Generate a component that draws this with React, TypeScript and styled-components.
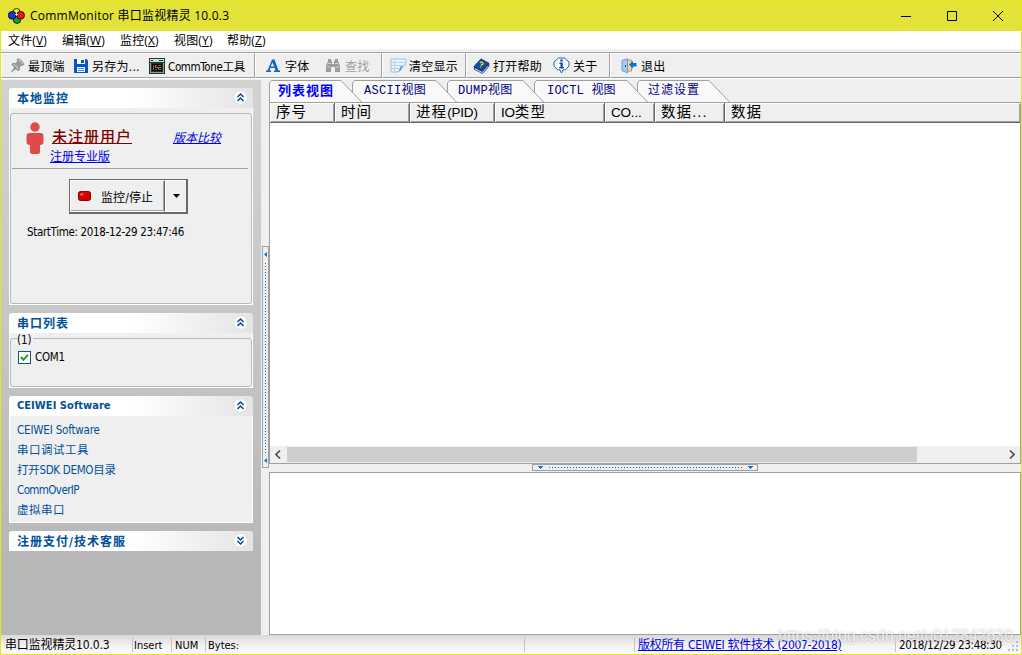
import React from "react";
import styled, { createGlobalStyle, css } from "styled-components";

const UI_FONT = `"DejaVu Sans Condensed", "Noto Sans CJK SC", sans-serif`;

const GlobalStyle = createGlobalStyle`
  * {
    box-sizing: border-box;
  }

  body {
    margin: 0;
    overflow: hidden;
    font-family: ${UI_FONT};
    font-size: 11.5px;
    color: #000;
  }

  svg {
    display: block;
    flex: none;
  }
`;

const Window = styled.div`
  width: 1022px;
  height: 655px;
  display: flex;
  flex-direction: column;
  border: 1px solid #e6e619;
  border-top: 0;
  background: #efefef;
  white-space: nowrap;
`;

const TitleBar = styled.header`
  height: 31px;
  flex: none;
  display: flex;
  align-items: center;
  padding-left: 7px;
  background: #e2e238;
  border-top: 1px solid #e6e619;
`;

const Title = styled.h1`
  flex: 1;
  margin: 0 0 2px 5px;
  font: 400 12px "Open Sans", "Noto Sans CJK SC", sans-serif;
  letter-spacing: 0.22px;
`;

const WindowButton = styled.button`
  width: 46px;
  height: 30px;
  padding: 0 0 1px;
  border: 0;
  background: none;
  display: flex;
  align-items: center;
  justify-content: center;
`;

const MenuBar = styled.nav`
  height: 18px;
  flex: none;
  display: flex;
  align-items: center;
  padding-left: 7px;
  background: #fff;
`;

const MenuItem = styled.span<{ $width: number }>`
  width: ${({ $width }) => $width}px;
  font-family: "Open Sans", "Noto Sans CJK SC", sans-serif;
  font-size: 12px;
  line-height: 18px;
  letter-spacing: 0.15px;
  padding-top: 2px;
`;

const ToolBar = styled.div`
  height: 27px;
  margin-top: 3px;
  flex: none;
  display: flex;
  border-top: 1px solid #a0a0a0;
  border-bottom: 1px solid #fff;
`;

const ToolGroup = styled.div<{ $width?: number; $pad: number }>`
  ${({ $width }) => ($width ? css`width: ${$width}px; border-right: 1px solid #a0a0a0;` : css`flex: 1;`)}
  display: flex;
  align-items: center;
  padding-left: ${({ $pad }) => $pad}px;
  border-top: 1px solid #fff;
  border-left: 1px solid #fff;
  border-bottom: 1px solid #a0a0a0;
`;

const ToolButton = styled.div<{ $width: number; $disabled?: boolean; $gap?: number; $compact?: boolean }>`
  width: ${({ $width }) => $width}px;
  flex: none;
  display: flex;
  align-items: center;
  gap: ${({ $gap }) => $gap ?? 3}px;
  font-size: ${({ $compact }) => ($compact ? 11.5 : 12)}px;
  letter-spacing: ${({ $compact }) => ($compact ? -0.35 : 0.25)}px;
  color: ${({ $disabled }) => ($disabled ? "#a0a0a0" : "#000")};
`;

const Client = styled.main`
  flex: 1;
  min-height: 0;
  display: flex;
  padding-top: 1px;
`;

const Sidebar = styled.aside`
  width: 260px;
  flex: none;
  display: flex;
  flex-direction: column;
  gap: 8px;
  padding: 8px;
  background: linear-gradient(#d2d2d2, #c6c6c6 45%, #b8b8b8 85%, #b7b7b7);
`;

const Panel = styled.section`
  display: flex;
  flex-direction: column;
`;

const PanelHeader = styled.div`
  height: 20px;
  display: flex;
  align-items: center;
  justify-content: space-between;
  padding: 0 5px 1px 8px;
  border-radius: 3px 3px 0 0;
  background: linear-gradient(90deg, #fff 50%, #e4e4e4);
`;

const PanelTitle = styled.h2<{ $latin?: boolean }>`
  margin: 0;
  font-size: ${({ $latin }) => ($latin ? 11 : 12)}px;
  font-weight: 700;
  letter-spacing: ${({ $latin }) => ($latin ? 0.05 : 1)}px;
  color: #00509a;
`;

const PanelBody = styled.div<{ $height: number }>`
  height: ${({ $height }) => $height}px;
  border: 1px solid #fff;
  border-top: 0;
  padding-top: 5px;
  background: #efefef;
`;

const GroupBox = styled.fieldset<{ $height: number; $titled?: boolean }>`
  height: ${({ $height }) => $height}px;
  min-width: 0;
  margin: ${({ $titled }) => ($titled ? "-5px" : 0)} 0 0;
  padding: 0;
  border: 1px solid #b9b9b9;
  border-radius: 3px;
`;

const UserRow = styled.div`
  height: 55px;
  margin: 0 3px 0 1px;
  padding: 8px 0 0 14px;
  display: flex;
  border-bottom: 1px solid #a0a0a0;
`;

const UserLinks = styled.div`
  margin-left: 6px;
  width: 123px;
`;

const Link = styled.a`
  display: block;
  color: #0000e8;
  text-decoration: underline;
  font-size: 12px;
  line-height: 16px;
`;

const UserName = styled(Link)`
  margin: 6px 0 3px 2px;
  color: #800000;
  font-size: 15px;
  font-weight: 500;
  letter-spacing: 1px;
  line-height: 18px;
`;

const CompareLink = styled(Link)`
  margin-top: 8px;
  font-style: italic;
`;

const SplitButton = styled.div`
  width: 119px;
  height: 35px;
  margin: 10px 0 0 58px;
  display: flex;
  border: 1px solid #696969;
  border-right: 2px solid #696969;
  border-bottom: 2px solid #696969;
`;

const ButtonFace = styled.span`
  width: 95px;
  display: flex;
  align-items: center;
  gap: 10px;
  padding-left: 7px;
  font-size: 12px;
  letter-spacing: 0.1px;
  border: 1px solid #fff;
  border-right: 1px solid #696969;
  box-shadow: inset -1px -1px #a0a0a0;
`;

const ButtonDrop = styled.span`
  flex: 1;
  display: flex;
  align-items: center;
  justify-content: center;
  border: 1px solid #fff;
  border-right: 0;
`;

const StartTime = styled.p`
  margin: 10px 0 0 16px;
  font-size: 11.5px;
  line-height: 16px;
  letter-spacing: -0.34px;
`;

const Legend = styled.legend`
  height: 10px;
  line-height: 14px;
  margin-left: 6px;
  padding: 0 1px 0 0;
  font-size: 11.5px;
`;

const PortRow = styled.label`
  margin: 7px 0 0 7px;
  display: flex;
  align-items: center;
  gap: 4px;
  font-size: 11.5px;
  letter-spacing: -0.3px;
`;

const CheckBox = styled.span`
  width: 13px;
  height: 13px;
  border: 1px solid #1c5180;
  background: #fff;
`;

const LinkList = styled.ul`
  margin: 0;
  padding: 0 0 0 7px;
  list-style: none;
`;

const LinkItem = styled.li<{ $spacing?: number }>`
  height: 20px;
  line-height: 18px;
  font-size: 11.5px;
  letter-spacing: ${({ $spacing }) => $spacing ?? 0}px;
  color: #00509a;
`;

const SideSplitter = styled.div`
  width: 8px;
  flex: none;
  padding: 166px 0 0 1px;
`;

const SideGrip = styled.div`
  width: 7px;
  height: 222px;
  display: flex;
  flex-direction: column;
  align-items: center;
  justify-content: space-between;
  padding: 5px 0 4px;
  border: 1px solid #a0a0a0;
`;

const Content = styled.div`
  flex: 1;
  min-width: 0;
  display: flex;
  flex-direction: column;
`;

const TabStrip = styled.div`
  height: 22px;
  flex: none;
  display: flex;
`;

const Tab = styled.div<{ $width: number; $pad: number; $order: number; $active?: boolean; $spacing: number }>`
  position: relative;
  z-index: ${({ $order }) => 10 - $order};
  width: ${({ $width }) => $width}px;
  padding-left: ${({ $pad }) => $pad}px;
  line-height: 23px;
  font-family: "Liberation Mono", "Noto Sans CJK SC", monospace;
  font-size: ${({ $active }) => ($active ? 13 : 12)}px;
  letter-spacing: ${({ $spacing }) => $spacing}px;
  font-weight: ${({ $active }) => ($active ? 700 : 400)};
  color: ${({ $active }) => ($active ? "#0000ff" : "#000080")};
`;

const TabShape = styled.svg`
  position: absolute;
  left: 0;
  top: 0;
`;

const TabText = styled.span`
  position: relative;
`;

const ListView = styled.div`
  height: 362px;
  flex: none;
  display: flex;
  flex-direction: column;
  border: 1px solid #a0a0a0;
  background: #fff;
`;

const ListHeader = styled.div`
  height: 20px;
  flex: none;
  display: flex;
  background: #efefef;
  border-bottom: 1px solid #696969;
`;

const Column = styled.div<{ $width?: number }>`
  ${({ $width }) => ($width ? css`width: ${$width}px; border-right: 1px solid #696969;` : css`flex: 1;`)}
  padding-left: 6px;
  line-height: 19px;
  font-family: "Liberation Sans", "Noto Sans CJK SC", sans-serif;
  font-size: 14.5px;
  letter-spacing: 1.1px;
  box-shadow: inset 1px 1px #fff, inset -1px -1px #a0a0a0;
`;

const Latin = styled.span`
  font-size: 13.5px;
  letter-spacing: -0.2px;
`;

const ListBody = styled.div`
  flex: 1;
`;

const ScrollBar = styled.div`
  height: 17px;
  flex: none;
  display: flex;
  align-items: center;
  justify-content: space-between;
  padding: 0 5px 0 5px;
  background: #efefef;
`;

const ScrollTrack = styled.div`
  flex: 1;
  margin: 0 9px 0 6px;
`;

const ScrollThumb = styled.div`
  width: 630px;
  height: 15px;
  background: #cdcdcd;
`;

const BottomSplitter = styled.div`
  height: 8px;
  flex: none;
  padding-left: 263px;
`;

const BottomGrip = styled.div`
  width: 226px;
  height: 7px;
  display: flex;
  align-items: center;
  justify-content: space-between;
  padding: 0 4px 0 5px;
  border: 1px solid #a0a0a0;
`;

const OutputPane = styled.div`
  flex: 1;
  border: 1px solid #a0a0a0;
  background: #fff;
`;

const StatusBar = styled.footer`
  position: relative;
  height: 19px;
  flex: none;
  display: flex;
  align-items: center;
  background: linear-gradient(#d9d9d9, #f4f4f4 60%, #fafafa);
`;

const StatusCell = styled.div<{ $width?: number; $pad?: number; $size?: number; $spacing?: number }>`
  ${({ $width }) => ($width ? css`width: ${$width}px;` : css`flex: 1;`)}
  height: 15px;
  line-height: 17px;
  padding-left: ${({ $pad }) => $pad ?? 1}px;
  font-size: ${({ $size }) => $size ?? 11}px;
  letter-spacing: ${({ $spacing }) => $spacing ?? 0}px;
  border-left: 1px solid #c4c4c4;

  &:first-child {
    border-left: 0;
  }
`;

const StatusLink = styled.a`
  color: #0000e8;
  text-decoration: underline;
`;

const Watermark = styled.span`
  position: absolute;
  right: 8px;
  top: -9px;
  font: 16px/20px "Liberation Sans", sans-serif;
  letter-spacing: -0.05px;
  color: rgba(255, 255, 255, 0.75);
  text-shadow: 0 0 2px rgba(0, 0, 0, 0.28);
`;

const SizeGrip = styled.svg`
  position: absolute;
  right: 2px;
  bottom: 2px;
`;

const AppIcon = () => (
  <svg width="17" height="16" viewBox="0 0 17 16" stroke="#111" strokeWidth="0.9">
    <circle cx="8.5" cy="4" r="3.5" fill="#ffe923" />
    <circle cx="9" cy="11.7" r="3.7" fill="#11a329" />
    <circle cx="4.2" cy="7.3" r="3.9" fill="#1238d8" />
    <circle cx="12.6" cy="7.3" r="3.9" fill="#ef1515" />
    <path d="M7 6.5h3M8.5 5v3" stroke="#e8e8d0" />
  </svg>
);

const PinIcon = () => (
  <svg width="16" height="16" viewBox="0 0 16 16">
    <path d="M1 15l5-6 1.4 1.4z" fill="#777" />
    <path d="M8.5.8c1.8-.8 6.8 3.9 6.3 5.8-.5 1.3-2.3.6-2.3.6L10.2 9c1 2-.2 4-1.4 3.5L3 7c-.5-1.6 2-2.2 3.6-1.3l2-2.4S7.8 1.5 8.5.8z" fill="#9b9b9b" stroke="#777" strokeWidth=".6" />
    <path d="M9.5 1.5L14 5.8M4.2 7c1.5-.5 4 1.5 4.6 4" fill="none" stroke="#d7d7d7" />
  </svg>
);

const SaveIcon = () => (
  <svg width="16" height="16" viewBox="0 0 16 16">
    <path d="M1 1h12.5L15 2.500V15H1z" fill="#0654c3" />
    <path d="M4 1h8v5H4z" fill="#fff" />
    <path d="M8 2h3v3H8z" fill="#0654c3" />
    <path d="M4 9h8v5H4z" fill="#f4f8ff" />
    <path d="M5 10.500h6M5 12.500h6" stroke="#4a87d8" />
  </svg>
);

const ToneIcon = () => (
  <svg width="16" height="16" viewBox="0 0 16 16" shapeRendering="crispEdges">
    <path d="M0 0h16v16H0z" fill="#173c36" />
    <path d="M1 1h14v3H1z" fill="#d5dcd4" />
    <path d="M2 2h2v1H2zM10 2h4v1h-4z" fill="#222" />
    <path d="M1 5h1v10H1zM14 5h1v10h-1zM2 14h12v1H2z" fill="#8f9e91" />
    <path d="M3 6h10v7H3z" fill="#080808" />
    <path d="M4 7h1v5H4zM6 7h2v1H6zM9 7h3v1H9zM6 11h2v1H6zM9 11h3v1H9z" fill="#e13122" />
    <path d="M6 9h6v1H6zM6 8h1v1H6zM9 10h1v1H9z" fill="#20b83c" />
  </svg>
);

const FontIcon = () => (
  <svg width="16" height="16" viewBox="0 0 16 16">
    <path d="M7 1.5h2.500l4 11H15V14H9v-1.500h1.600l-.8-2.500H5.300l-.8 2.500H6V14H1v-1.500h1.500zM7.400 4.500L5.800 8.500h3.400z" fill="#1367c6" fillRule="evenodd" />
  </svg>
);

const FindIcon = () => (
  <svg width="16" height="16" viewBox="0 0 16 16" fill="#9c9c9c">
    <path d="M3 1h3v2h1v3h2V3h1V1h3v2l2 5v6h-5V9H6v5H1V8l2-5z" />
    <path d="M3 5.500h3M10 5.500h3M2 9h3M11 9h3" stroke="#d5d5d5" />
  </svg>
);

const ClearIcon = () => (
  <svg width="17" height="16" viewBox="0 0 17 16">
    <path d="M1 1h15v5.500c-2 .5-3.500 1.500-4 3.500-1 2.500-3 3.500-5 4H1z" fill="#e5f5fc" stroke="#8cc4e6" />
    <path d="M2 4.500h13M2 7.500h10M2 10.500h8" stroke="#a6d8ee" />
    <path d="M4.500 1.500V13" stroke="#f3c6c6" />
    <path d="M7 14c3-1 3-5 3.500-5.500 1.500-1 4-1 5.500-2-2 .8-3.500 1.600-4 3.500-1 2.500-3 3.500-5 4z" fill="#5c9ccb" />
  </svg>
);

const BookIcon = () => (
  <svg width="17" height="16" viewBox="0 0 17 16">
    <path d="M1 8.500L8 .8l8 4.400v3L9.500 15.500 1.500 11.500z" fill="#123f83" stroke="#0a2858" strokeWidth=".6" />
    <path d="M1.500 8L8 1l7.500 4.200-6.300 7z" fill="#124f9f" />
    <path d="M2 10.300l7.200 3.700 6.300-6.700v.8L9.300 14.900 2 11.200z" fill="#edf3f8" />
    <path d="M6.800 4.800c1.200-1.500 4-.2 3.200 1.200-.5.900-1.700.5-2 1.500M7.300 8.700l.8.400" fill="none" stroke="#f4d52a" strokeWidth="1.400" />
  </svg>
);

const InfoIcon = () => (
  <svg width="17" height="17" viewBox="0 0 17 17">
    <path d="M5.500 1h6L16 5v4l-3.500 3.800H10L8.500 16 7 12.800H4.500L1 9V5z" fill="#fff" stroke="#2161a5" strokeLinejoin="round" />
    <path d="M7.300 2.500h2.500v2H7.300zM6.500 5.500h3.300V10H11v1.400H6.200V10h1.300V6.900h-1z" fill="#0f4d9e" />
  </svg>
);

const ExitIcon = () => (
  <svg width="16" height="16" viewBox="0 0 16 16">
    <path d="M5.500 2h5v11h-5z" fill="#f4d59a" stroke="#9a9aa2" />
    <path d="M1 2.500L6.500.8v14L1 12.600z" fill="#a9cbed" stroke="#7397c6" />
    <path d="M4.500 7v2" stroke="#223e66" />
    <path d="M8 6.500L12 3v2h3.500v3.500H12v2.200z" fill="#0673dc" />
  </svg>
);

const UserIcon = () => (
  <svg width="18" height="33" viewBox="0 0 18 33" fill="#e2494b">
    <circle cx="9" cy="5" r="4.700" />
    <path d="M3.500 11h11q3 0 3 3v6q0 3-3.500 3v7q0 2-2 2H6q-2 0-2-2v-7q-3.500 0-3.500-3v-6q0-3 3-3z" />
  </svg>
);

const Chevrons = ({ down }: { down?: boolean }) => (
  <svg width="15" height="15" viewBox="0 0 15 15">
    <circle cx="7.500" cy="7.500" r="6.900" fill="#fff" stroke="#dcdcdc" />
    <path
      d={down ? "M4.500 4l3 3 3-3M4.500 8l3 3 3-3" : "M4.500 7l3-3 3 3M4.500 11l3-3 3 3"}
      fill="none"
      stroke="#0a468c"
      strokeWidth="1.500"
    />
  </svg>
);

const ArrowLeft = () => (
  <svg width="3" height="5"><path d="M3 0v5L0 2.500z" fill="#0078d7" /></svg>
);

const ArrowDown = () => (
  <svg width="5" height="3" shapeRendering="crispEdges">
    <path d="M0 0h5v1H0zM1 1h3v1H1zM2 2h1v1H2z" fill="#0078d7" />
  </svg>
);

type TabData = { label: string; width: number; top: number; pad: number; spacing: number };

const tabs: TabData[] = [
  { label: "列表视图", width: 83, top: 72, pad: 9, spacing: 1 },
  { label: "ASCII视图", width: 95, top: 84, pad: 12, spacing: 0.3 },
  { label: "DUMP视图", width: 87, top: 76, pad: 11, spacing: 0.3 },
  { label: "IOCTL 视图", width: 103, top: 93, pad: 13, spacing: 0.2 },
  { label: "过滤设置", width: 94, top: 72, pad: 11, spacing: 1 },
];

const menus = [
  { label: "文件", key: "V", width: 54 },
  { label: "编辑", key: "W", width: 58 },
  { label: "监控", key: "X", width: 54 },
  { label: "视图", key: "Y", width: 53 },
  { label: "帮助", key: "Z", width: 45 },
];

const links = [
  { label: "CEIWEI Software", spacing: -0.18 },
  { label: "串口调试工具", spacing: 0.5 },
  { label: "打开SDK DEMO目录", spacing: -0.3 },
  { label: "CommOverIP", spacing: -0.6 },
  { label: "虚拟串口", spacing: 0.5 },
];

const SidePanels = () => (
  <Sidebar>
    <Panel>
      <PanelHeader>
        <PanelTitle>本地监控</PanelTitle>
        <Chevrons />
      </PanelHeader>
      <PanelBody $height={197}>
        <GroupBox $height={191}>
          <UserRow>
            <UserIcon />
            <UserLinks>
              <UserName>未注册用户</UserName>
              <Link>注册专业版</Link>
            </UserLinks>
            <CompareLink>版本比较</CompareLink>
          </UserRow>
          <SplitButton>
            <ButtonFace>
              <svg width="13" height="10" viewBox="0 0 13 10">
                <rect x="0.5" y="0.5" width="12" height="9" rx="2" fill="#d40000" stroke="#8a0000" />
                <path d="M2.500 2.500h4l-4 2.500z" fill="#ff8080" />
              </svg>
              监控/停止
            </ButtonFace>
            <ButtonDrop>
              <svg width="7" height="4" viewBox="0 0 7 4">
                <path d="M0 0h7L3.500 4z" />
              </svg>
            </ButtonDrop>
          </SplitButton>
          <StartTime>StartTime: 2018-12-29 23:47:46</StartTime>
        </GroupBox>
      </PanelBody>
    </Panel>

    <Panel>
      <PanelHeader>
        <PanelTitle>串口列表</PanelTitle>
        <Chevrons />
      </PanelHeader>
      <PanelBody $height={55}>
        <GroupBox $height={54} $titled>
          <Legend>(1)</Legend>
          <PortRow>
            <CheckBox>
              <svg width="11" height="11" viewBox="0 0 11 11">
                <path d="M2 5l2.500 2.800L9 2.800" fill="none" stroke="#21a121" strokeWidth="2" />
              </svg>
            </CheckBox>
            COM1
          </PortRow>
        </GroupBox>
      </PanelBody>
    </Panel>

    <Panel>
      <PanelHeader>
        <PanelTitle $latin>CEIWEI Software</PanelTitle>
        <Chevrons />
      </PanelHeader>
      <PanelBody $height={107}>
        <LinkList>
          {links.map(({ label, spacing }) => (
            <LinkItem key={label} $spacing={spacing}>{label}</LinkItem>
          ))}
        </LinkList>
      </PanelBody>
    </Panel>

    <Panel>
      <PanelHeader>
        <PanelTitle>注册支付/技术客服</PanelTitle>
        <Chevrons down />
      </PanelHeader>
    </Panel>
  </Sidebar>
);

const App: React.FC = () => (
  <>
    <GlobalStyle />
    <Window>
      <TitleBar>
        <AppIcon />
        <Title>CommMonitor 串口监视精灵 10.0.3</Title>
        <WindowButton aria-label="Minimize">
          <svg width="10" height="10"><path d="M0 5.500h10" stroke="#000" /></svg>
        </WindowButton>
        <WindowButton aria-label="Maximize">
          <svg width="10" height="10"><path d="M.5.5h9v9h-9z" fill="none" stroke="#000" /></svg>
        </WindowButton>
        <WindowButton aria-label="Close">
          <svg width="10" height="10"><path d="M0 0l10 10M10 0L0 10" stroke="#000" /></svg>
        </WindowButton>
      </TitleBar>

      <MenuBar>
        {menus.map(({ label, key, width }) => (
          <MenuItem key={key} $width={width}>
            {label}(<u>{key}</u>)
          </MenuItem>
        ))}
      </MenuBar>

      <ToolBar>
        <ToolGroup $width={254} $pad={7}>
          <ToolButton $width={64}><PinIcon />最顶端</ToolButton>
          <ToolButton $width={76}><SaveIcon />另存为...</ToolButton>
          <ToolButton $width={100} $compact><ToneIcon />CommTone工具</ToolButton>
        </ToolGroup>
        <ToolGroup $width={127} $pad={9}>
          <ToolButton $width={60} $gap={4}><FontIcon />字体</ToolButton>
          <ToolButton $width={50} $gap={4} $disabled><FindIcon />查找</ToolButton>
        </ToolGroup>
        <ToolGroup $width={84} $pad={7}>
          <ToolButton $width={74} $gap={2}><ClearIcon />清空显示</ToolButton>
        </ToolGroup>
        <ToolGroup $width={144} $pad={6}>
          <ToolButton $width={80}><BookIcon />打开帮助</ToolButton>
          <ToolButton $width={50}><InfoIcon />关于</ToolButton>
        </ToolGroup>
        <ToolGroup $pad={10}>
          <ToolButton $width={50} $gap={4}><ExitIcon />退出</ToolButton>
        </ToolGroup>
      </ToolBar>

      <Client>
        <SidePanels />
        <SideSplitter>
          <SideGrip>
            <ArrowLeft />
            <svg width="1" height="190" shapeRendering="crispEdges">
              <path d="M.5 0v190" stroke="#0078d7" strokeDasharray="1 2" />
            </svg>
            <ArrowLeft />
          </SideGrip>
        </SideSplitter>

        <Content>
          <TabStrip>
            {tabs.map(({ label, width, top, pad, spacing }, index) => (
              <Tab key={label} $width={width} $pad={pad} $spacing={spacing} $order={index} $active={index === 0}>
                <TabShape width={top + 22} height="22">
                  <path d={`M.5 23V3L2.500.5H${top}L${top + 21} 22.500`} fill="#f9f9f9" stroke="#a0a0a0" />
                </TabShape>
                <TabText>{label}</TabText>
              </Tab>
            ))}
          </TabStrip>

          <ListView>
            <ListHeader>
              <Column $width={65}>序号</Column>
              <Column $width={75}>时间</Column>
              <Column $width={85}>进程<Latin>(PID)</Latin></Column>
              <Column $width={110}><Latin>IO</Latin>类型</Column>
              <Column $width={50}><Latin>CO...</Latin></Column>
              <Column $width={70}>数据...</Column>
              <Column>数据</Column>
            </ListHeader>
            <ListBody />
            <ScrollBar>
              <svg width="6" height="9"><path d="M5 .5l-4 4 4 4" fill="none" stroke="#505050" strokeWidth="1.700" /></svg>
              <ScrollTrack><ScrollThumb /></ScrollTrack>
              <svg width="6" height="9"><path d="M1 .5l4 4-4 4" fill="none" stroke="#505050" strokeWidth="1.700" /></svg>
            </ScrollBar>
          </ListView>

          <BottomSplitter>
            <BottomGrip>
              <ArrowDown />
              <svg width="194" height="1" shapeRendering="crispEdges">
                <path d="M0 .5h194" stroke="#0078d7" strokeDasharray="1 2" />
              </svg>
              <ArrowDown />
            </BottomGrip>
          </BottomSplitter>
          <OutputPane />
        </Content>
      </Client>

      <StatusBar>
        <StatusCell $width={131} $pad={4} $size={12} $spacing={-0.15}>串口监视精灵10.0.3</StatusCell>
        <StatusCell $width={39}>Insert</StatusCell>
        <StatusCell $width={34} $pad={3}>NUM</StatusCell>
        <StatusCell $width={319} $pad={2}>Bytes:</StatusCell>
        <StatusCell $width={110} />
        <StatusCell $width={261} $pad={3} $size={12} $spacing={-0.3}>
          <StatusLink>版权所有 CEIWEI 软件技术 (2007-2018)</StatusLink>
        </StatusCell>
        <StatusCell $size={11.5} $spacing={-0.35} $pad={3}>2018/12/29 23:48:30</StatusCell>
        <SizeGrip width="12" height="12" fill="#bdbdbd">
          <path d="M9 1h2v2H9zM9 5h2v2H9zM9 9h2v2H9zM5 5h2v2H5zM5 9h2v2H5zM1 9h2v2H1z" />
        </SizeGrip>
        <Watermark>https://blog.csdn.net/u012842630</Watermark>
      </StatusBar>
    </Window>
  </>
);

export default App;
